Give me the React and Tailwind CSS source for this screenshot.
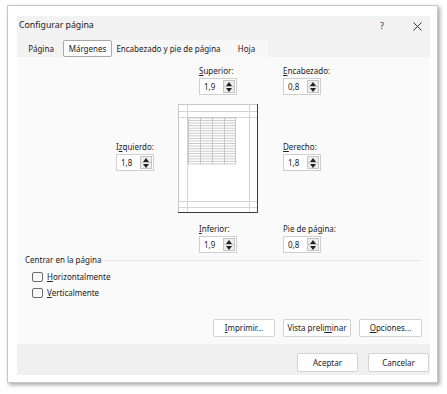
import React from "react";

function Spin({ value }) {
  return (
    <div className="flex h-[17px] w-[38px] border border-[#cfcfcf] bg-white">
      <div className="flex-1 pl-[4px] text-[8px] leading-[15px] text-[#222]">{value}</div>
      <div className="my-[1px] mr-[1px] flex w-[12px] flex-col border border-[#c4c4c4] bg-[#ededed]">
        <div className="flex flex-1 items-center justify-center border-b border-[#c4c4c4]">
          <svg width="6" height="4" viewBox="0 0 6 4">
            <path d="M0 4 L3 0 L6 4 Z" fill="#222" />
          </svg>
        </div>
        <div className="flex flex-1 items-center justify-center">
          <svg width="6" height="4" viewBox="0 0 6 4">
            <path d="M0 0 L6 0 L3 4 Z" fill="#222" />
          </svg>
        </div>
      </div>
    </div>
  );
}

function Field({ label, value, className = "" }) {
  return (
    <div className={"flex flex-col " + className}>
      <div className="h-[13px] whitespace-nowrap text-[8px] leading-[12px] text-[#222]">{label}</div>
      <Spin value={value} />
    </div>
  );
}

function Preview() {
  const rows = [];
  for (let i = 0; i <= 18; i++) rows.push(14 + i * 2.55);
  return (
    <svg width="80" height="109" viewBox="0 0 80 109">
      <rect x="0.5" y="0.5" width="79" height="108" fill="#fff" stroke="#c8c8c8" />
      <path d="M79.5 0 V108.5 H0" fill="none" stroke="#3a3a3a" />
      <line x1="9.5" y1="1" x2="9.5" y2="108" stroke="#d4d4d4" />
      <line x1="71.5" y1="1" x2="71.5" y2="108" stroke="#d4d4d4" />
      <line x1="1" y1="7.5" x2="79" y2="7.5" stroke="#d4d4d4" />
      <line x1="1" y1="13.5" x2="79" y2="13.5" stroke="#d4d4d4" />
      <line x1="1" y1="97.5" x2="79" y2="97.5" stroke="#d4d4d4" />
      <line x1="1" y1="103.5" x2="79" y2="103.5" stroke="#d4d4d4" />
      {rows.map((y, i) => (
        <line key={i} x1="10" y1={y} x2="58" y2={y} stroke="#bdbdbd" strokeWidth="0.8" />
      ))}
      {[10.5, 22.5, 34.5, 46.5, 57.5].map((x, i) => (
        <line key={i} x1={x} y1="14" x2={x} y2={rows[18]} stroke="#bdbdbd" strokeWidth="0.8" />
      ))}
    </svg>
  );
}

function Check({ children }) {
  return (
    <div className="flex h-[16px] items-center gap-[4px]">
      <div className="h-[10px] w-[11px] rounded-[2px] border border-[#6a6a6a] bg-[#fafafa]" />
      <div className="text-[8px] leading-[16px] text-[#222]">{children}</div>
    </div>
  );
}

function Btn({ children, className = "" }) {
  return (
    <div
      className={
        "flex h-[18px] items-center justify-center rounded-[2px] border border-[#d3d3d3] bg-white text-[8px] text-[#222] " +
        className
      }
    >
      {children}
    </div>
  );
}

export default function App() {
  return (
    <div className="h-[394px] w-[447px] bg-white pl-[7px] pt-[5px] font-['Noto_Sans','Open_Sans',sans-serif]">
      <div className="flex h-[378px] w-[431px] flex-col border border-[#c6c6c6] bg-white pb-[7px] pl-[9px] pr-[7px] pt-[10px] shadow-[2px_2px_4px_rgba(0,0,0,0.35)]">
        {/* title */}
        <div className="flex h-[20px] items-center bg-[#f2f2f2] pl-[2px]">
          <div className="flex-1 text-[8.75px] text-[#1a1a1a]">Configurar página</div>
          <div className="mr-[29px] text-[9px] text-[#333]">?</div>
          <svg width="9" height="9" viewBox="0 0 9 9" className="mr-[8px]">
            <path d="M0.5 0.5 L8.5 8.5 M8.5 0.5 L0.5 8.5" stroke="#333" strokeWidth="1" />
          </svg>
        </div>
        {/* tabs */}
        <div className="flex h-[21px] items-end bg-[#f2f2f2] pl-[2px]">
          <div className="flex h-[17px] w-[44px] items-center justify-center text-[8px] text-[#222]">Página</div>
          <div className="flex h-[17px] w-[49px] items-center justify-center rounded-[2px] border border-[#a8a8a8] bg-white text-[8px] text-[#222]">
            Márgenes
          </div>
          <div className="flex h-[17px] w-[113px] items-center justify-center bg-[#f7f7f7] text-[8px] text-[#222]">
            Encabezado y pie de página
          </div>
          <div className="flex h-[17px] w-[43px] items-center justify-center bg-[#f7f7f7] text-[8px] text-[#222]">
            Hoja
          </div>
        </div>
        {/* panel */}
        <div className="flex h-[287px] flex-col bg-[#fafafa]">
          <div className="grid grid-cols-[38px_24px_80px_25px_38px] pl-[99px] pt-[8px]">
            <div />
            <div />
            <Field className="ml-[21px]" label={<><u>S</u>uperior:</>} value="1,9" />
            <div />
            <Field label={<><u>E</u>ncabezado:</>} value="0,8" />

            <Field className="mt-[4px] self-center" label={<>I<u>z</u>quierdo:</>} value="1,8" />
            <div />
            <div className="mt-[9px]">
              <Preview />
            </div>
            <div />
            <Field className="mt-[4px] self-center" label={<><u>D</u>erecho:</>} value="1,8" />

            <div />
            <div />
            <Field className="ml-[21px] mt-[10px]" label={<><u>I</u>nferior:</>} value="1,9" />
            <div />
            <Field className="mt-[10px]" label={<>Pie de pá<u>g</u>ina:</>} value="0,8" />
          </div>

          <div className="flex items-center pl-[8px] pr-[10px]">
            <div className="text-[8px] leading-[14px] text-[#222]">Centrar en la página</div>
            <div className="ml-[3px] flex-1 border-t border-[#e2e2e2]" />
          </div>
          <div className="mt-[2px] flex flex-col pl-[15px]">
            <Check>
              <u>H</u>orizontalmente
            </Check>
            <Check>
              <u>V</u>erticalmente
            </Check>
          </div>

          <div className="mt-auto flex justify-end gap-[8px] pb-[7px] pr-[8px]">
            <Btn className="w-[62px]">
              <span>
                <u>I</u>mprimir...
              </span>
            </Btn>
            <Btn className="w-[68px]">
              <span>
                Vista preli<u>m</u>inar
              </span>
            </Btn>
            <Btn className="w-[63px]">
              <span>
                <u>O</u>pciones...
              </span>
            </Btn>
          </div>
        </div>
        {/* footer */}
        <div className="flex flex-1 justify-end gap-[10px] bg-[#f0f0f0] pr-[1px] pt-[9px]">
          <Btn className="h-[19px] w-[61px] border-[#6b9fd4]">Aceptar</Btn>
          <Btn className="h-[19px] w-[61px]">Cancelar</Btn>
        </div>
      </div>
    </div>
  );
}
